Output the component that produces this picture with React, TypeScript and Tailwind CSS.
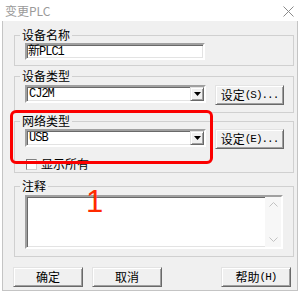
import React from "react";

const FONT = '"Liberation Mono","Noto Sans CJK SC",monospace';
const CJK = '"Noto Sans CJK SC","Liberation Sans",sans-serif';

const sunken =
  "border-2 border-t-[#a0a0a0] border-l-[#a0a0a0] border-b-white border-r-white shadow-[inset_1px_1px_0_#696969,inset_-1px_-1px_0_#e3e3e3] bg-white";
const raised =
  "border border-t-[#e3e3e3] border-l-[#e3e3e3] border-r-[#696969] border-b-[#696969] shadow-[inset_1px_1px_0_#fff,inset_-1px_-1px_0_#a0a0a0] bg-[#f0f0f0]";

function Legend({ children }: { children: React.ReactNode }) {
  return (
    <legend className="ml-[5px] px-[2px] text-[12px] leading-[12px] text-black" style={{ fontFamily: CJK }}>
      {children}
    </legend>
  );
}

function Combo({ value }: { value: string }) {
  return (
    <div className={`${sunken} w-[181px] h-[18px] flex items-center justify-between`}>
      <span className="pl-[2px] text-[12px] leading-[12px] tracking-[-1px]" style={{ fontFamily: FONT }}>
        {value}
      </span>
      <div className={`${raised} w-[14px] h-[14px] flex items-center justify-center`}>
        <svg width="7" height="4" viewBox="0 0 7 4">
          <path d="M0 0H7L3.5 4Z" fill="#000" />
        </svg>
      </div>
    </div>
  );
}

function Btn({ children, w = "w-[70px]" }: { children: React.ReactNode; w?: string }) {
  return (
    <div
      className={`${raised} ${w} h-[20px] flex items-center justify-center whitespace-nowrap text-[12px] leading-[12px] text-black`}
      style={{ fontFamily: FONT }}
    >
      {children}
    </div>
  );
}

function Ascii({ children }: { children: React.ReactNode }) {
  return (
    <span className="text-[11px] tracking-[-1px]" style={{ fontFamily: FONT }}>
      {children}
    </span>
  );
}

export default function App() {
  return (
    <div className="w-[300px] h-[293px] bg-white relative overflow-hidden" style={{ fontFamily: FONT }}>
      <div className="h-[21px] flex items-center justify-between pl-[5px] pr-[6px]">
        <span className="text-[12px] leading-[12px] text-[#9a9a9a]" style={{ fontFamily: CJK }}>
          变更PLC
        </span>
        <svg width="11" height="11" viewBox="0 0 11 11" className="mt-[1px]">
          <path d="M0.5 0.5L10.5 10.5M10.5 0.5L0.5 10.5" stroke="#8a8a8a" strokeWidth="1" />
        </svg>
      </div>
      <div className="mx-[2px] h-[270px] bg-[#f0f0f0] border-x border-b border-[#c4c4c4] pl-[11px] pr-[3px] pt-[8px]">
        <fieldset className="border border-[#d0d0d0] w-[280px]">
          <Legend>设备名称</Legend>
          <div className="pl-[10px] pt-[2px] pb-[5px]">
            <div className={`${sunken} w-[180px] h-[17px] flex items-center`}>
              <span className="pl-[1px] text-[12px] leading-[12px] tracking-[-1px]" style={{ fontFamily: FONT }}>
                新PLC1
              </span>
            </div>
          </div>
        </fieldset>

        <fieldset className="border border-[#d0d0d0] w-[280px] mt-[4px]">
          <Legend>设备类型</Legend>
          <div className="pl-[10px] pt-[3px] pb-[7px] flex items-start gap-[9px]">
            <Combo value="CJ2M" />
            <Btn w="w-[69px]">
              <span style={{ fontFamily: CJK }}>设定</span>
              <Ascii>(S)...</Ascii>
            </Btn>
          </div>
        </fieldset>

        <fieldset className="border border-[#d0d0d0] w-[280px] mt-[2px]">
          <Legend>网络类型</Legend>
          <div className="pl-[10px] pt-[2px] pb-[2px]">
            <div className="flex items-start gap-[9px]">
              <Combo value="USB" />
              <Btn w="w-[69px]">
                <span style={{ fontFamily: CJK }}>设定</span>
                <Ascii>(E)...</Ascii>
              </Btn>
            </div>
            <div className="flex items-center mt-[9px] h-[12px] ml-[1px]">
              <div className="w-[11px] h-[11px] bg-white border border-t-[#808080] border-l-[#808080] border-b-[#d0d0d0] border-r-[#d0d0d0]" />
              <span className="ml-[4px] text-[12px] leading-[12px]" style={{ fontFamily: CJK }}>
                显示所有
              </span>
            </div>
          </div>
        </fieldset>

        <fieldset className="border border-[#d0d0d0] w-[280px] mt-[7px]">
          <Legend>注释</Legend>
          <div className="pl-[10px] pt-[3px] pb-[7px]">
            <div className={`${sunken} w-[258px] h-[54px] flex justify-end`}>
              <div className="w-[16px] h-full bg-[#f7f7f7] flex flex-col items-center justify-between py-[5px]">
                <svg width="9" height="5" viewBox="0 0 9 5">
                  <path d="M0.5 4.5L4.5 0.5L8.5 4.5" stroke="#c2c2c2" fill="none" />
                </svg>
                <svg width="9" height="5" viewBox="0 0 9 5">
                  <path d="M0.5 0.5L4.5 4.5L8.5 0.5" stroke="#c2c2c2" fill="none" />
                </svg>
              </div>
            </div>
          </div>
        </fieldset>

        <div className="-ml-[1px] mt-[10px] w-[278px] flex items-center">
          <Btn>
            <span style={{ fontFamily: CJK }}>确定</span>
          </Btn>
          <div className="ml-[9px]">
            <Btn>
              <span style={{ fontFamily: CJK }}>取消</span>
            </Btn>
          </div>
          <div className="ml-auto">
            <Btn>
              <span style={{ fontFamily: CJK }}>帮助</span>
              <Ascii>(H)</Ascii>
            </Btn>
          </div>
        </div>
      </div>

      <div className="absolute left-[10px] top-[110px] w-[203px] h-[54px] border-[3px] border-[#fb0000] rounded-[6px]" />
      <div
        className="absolute left-[86px] top-[186px] text-[31px] leading-[31px] text-[#ff2a00]"
        style={{ fontFamily: '"Liberation Sans",Arial,sans-serif' }}
      >
        1
      </div>
    </div>
  );
}
